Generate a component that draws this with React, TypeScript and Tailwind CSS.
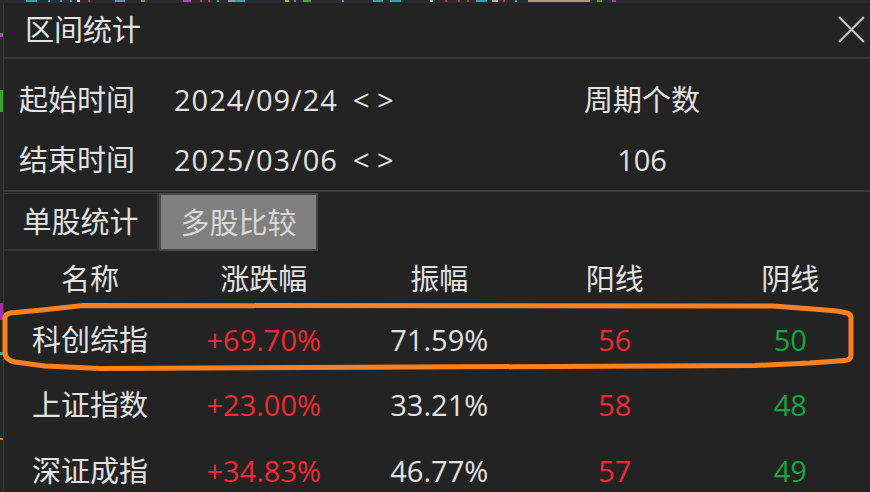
const TOP_MARKS = [
  { x: 26, w: 11, c: "#2aa7a8" },
  { x: 48, w: 2, c: "#2aa7a8" },
  { x: 60, w: 2, c: "#2aa7a8" },
  { x: 70, w: 2, c: "#2aa7a8" },
  { x: 77, w: 3, c: "#d9d9d9" },
  { x: 88, w: 2, c: "#e0303a" },
  { x: 115, w: 10, c: "#2aa7a8" },
  { x: 141, w: 4, c: "#8a8a4a" },
  { x: 183, w: 8, c: "#b048b8" },
  { x: 200, w: 2, c: "#e0303a" },
  { x: 208, w: 2, c: "#e0303a" },
  { x: 217, w: 2, c: "#2aa7a8" },
  { x: 228, w: 7, c: "#9a9a9a" },
  { x: 235, w: 10, c: "#2aa7a8" },
  { x: 285, w: 4, c: "#b8a850" },
  { x: 294, w: 2, c: "#2aa7a8" },
  { x: 303, w: 8, c: "#5a9a40" },
  { x: 342, w: 2, c: "#2aa7a8" },
  { x: 373, w: 10, c: "#2aa7a8" },
  { x: 390, w: 11, c: "#2aa7a8" },
  { x: 430, w: 3, c: "#d0d0d0" },
  { x: 445, w: 2, c: "#e0303a" },
  { x: 458, w: 2, c: "#e0303a" },
  { x: 467, w: 2, c: "#e0303a" },
  { x: 476, w: 11, c: "#2aa7a8" },
  { x: 492, w: 6, c: "#c8a8a8" },
  { x: 503, w: 2, c: "#e0303a" },
  { x: 515, w: 2, c: "#2aa7a8" },
  { x: 528, w: 62, c: "#a8a050" },
  { x: 597, w: 5, c: "#4a9a30" },
  { x: 612, w: 4, c: "#a040b0" },
];

const SIDE_MARKS = [
  { y: 33, h: 4, c: "#b048b8" },
  { y: 90, h: 22, c: "#3aa030" },
  { y: 303, h: 17, c: "#a030a8" },
  { y: 352, h: 3, c: "#2aa7a8" },
  { y: 438, h: 2, c: "#e07020" },
];

const ROWS = [
  { name: "科创综指", chg: "+69.70%", amp: "71.59%", up: "56", down: "50" },
  { name: "上证指数", chg: "+23.00%", amp: "33.21%", up: "58", down: "48" },
  { name: "深证成指", chg: "+34.83%", amp: "46.77%", up: "57", down: "49" },
];

const HEADERS = ["名称", "涨跌幅", "振幅", "阳线", "阴线"];

export default function App() {
  return (
    <div className="relative w-[870px] h-[492px] overflow-hidden bg-[#232323] text-[#e2e2e2] font-['Open_Sans','Noto_Sans_CJK_SC',sans-serif] text-[29px] leading-none">
      {/* chart peeking out above the window */}
      <div className="relative h-[3px] bg-[#2a2a31]">
        {TOP_MARKS.map((m) => (
          <span key={m.x} className="absolute top-0 h-[2px]" style={{ left: m.x, width: m.w, background: m.c }} />
        ))}
      </div>

      <div className="flex h-[489px]">
        <div className="relative w-[3px] shrink-0 bg-[#272727]">
          {SIDE_MARKS.map((m) => (
            <span key={m.y} className="absolute left-0 w-[3px]" style={{ top: m.y - 3, height: m.h, background: m.c }} />
          ))}
        </div>

        <div className="flex-1 border-l border-[#3a3a3a]">
          {/* title bar */}
          <div className="flex h-[54px] items-center pl-[21px]">
            <span className="mb-[2px] text-[#e4e4e4]">区间统计</span>
            <svg className="ml-auto mr-[13px] mb-[2px]" width="27" height="27" viewBox="0 0 27 27" fill="none" stroke="#c4c4c4" strokeWidth="2.2">
              <path d="M1 1L26 26M26 1L1 26" />
            </svg>
          </div>

          {/* date range */}
          <div className="flex border-y-2 border-[#3a3a3a]">
            <div className="w-[538px] pt-[10px] pb-[1px]">
              <div className="flex h-[60px] items-center">
                <span className="w-[170px] pl-[15px]">起始时间</span>
                <span className="w-[179px] tracking-[1px]">2024/09/24</span>
                <span>&lt; &gt;</span>
              </div>
              <div className="flex h-[60px] items-center">
                <span className="w-[170px] pl-[15px]">结束时间</span>
                <span className="w-[179px] tracking-[1px]">2025/03/06</span>
                <span>&lt; &gt;</span>
              </div>
            </div>
            <div className="w-[200px] pt-[10px] pb-[1px] text-center">
              <div className="flex h-[60px] items-center justify-center">周期个数</div>
              <div className="flex h-[60px] items-center justify-center">106</div>
            </div>
          </div>

          {/* tabs */}
          <div className="flex h-[59px] pt-[1px]">
            <div className="flex w-[155px] items-center justify-center border-t border-r-2 border-b-2 border-[#363636]">
              单股统计
            </div>
            <div className="flex w-[159px] items-center justify-center border-2 border-[#474747] bg-[#808080] text-[#d8d8d8]">
              多股比较
            </div>
          </div>

          {/* comparison table */}
          <div className="grid grid-cols-[172px_175.5px_175.5px_175.5px_175.5px] text-center">
            {HEADERS.map((h) => (
              <div key={h} className="flex h-[55.5px] items-center justify-center">
                {h}
              </div>
            ))}
            {ROWS.map((r) => (
              <div key={r.name} className="contents">
                <div className="flex h-[65.5px] items-center justify-center">{r.name}</div>
                <div className="flex h-[65.5px] items-center justify-center text-[#ee2a33]">{r.chg}</div>
                <div className="flex h-[65.5px] items-center justify-center">{r.amp}</div>
                <div className="flex h-[65.5px] items-center justify-center text-[#ee2a33]">{r.up}</div>
                <div className="flex h-[65.5px] items-center justify-center text-[#14a83c]">{r.down}</div>
              </div>
            ))}
          </div>
        </div>
      </div>

      {/* hand-drawn orange highlight around the first row */}
      <svg className="pointer-events-none absolute left-0 top-0" width="870" height="492" viewBox="0 0 870 492" fill="none">
        <path
          d="M83 305.5 L773 306 L813 309 L837 311 L847 313 Q851 314 851 318 L851 355 Q851 360 845 360.5 L810 363 L755 365.5 L100 368.5 L45 366 L15 362 Q5 360 5 352 L5 318 Q5 313 15 312.5 L42 310 Z"
          stroke="#ff8021"
          strokeWidth="5"
          strokeLinejoin="round"
        />
      </svg>
    </div>
  );
}
